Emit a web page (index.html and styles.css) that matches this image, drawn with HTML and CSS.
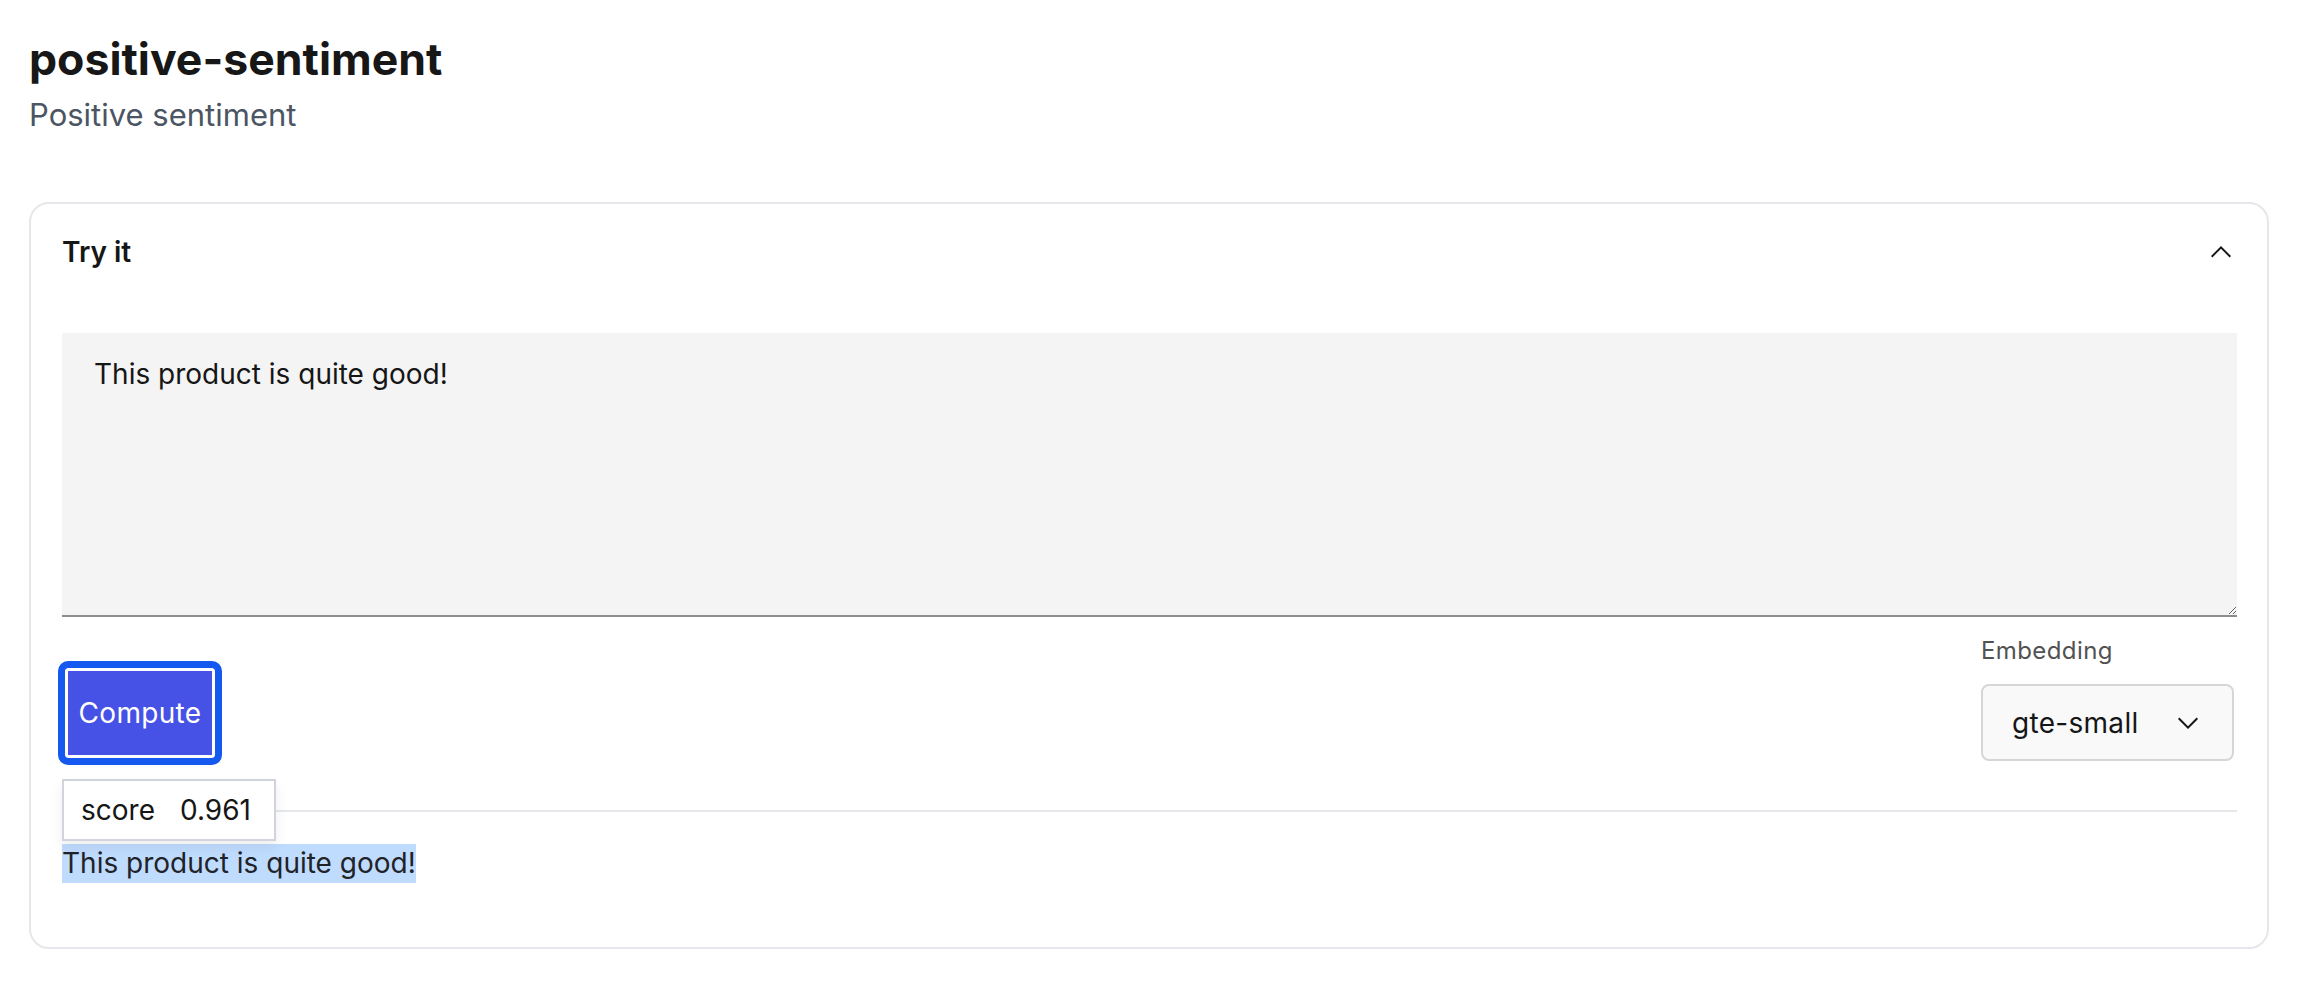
FILE: index.html
```html
<!DOCTYPE html>
<html lang="en">
<head>
<meta charset="utf-8">
<title>positive-sentiment</title>
<link rel="stylesheet" href="styles.css">
</head>
<body>
<div class="page">
  <header class="page-head">
    <h1 class="title">positive-sentiment</h1>
    <p class="subtitle">Positive sentiment</p>
  </header>
  <section class="card">
    <div class="card-head">
      <h2 class="card-title">Try it</h2>
      <button class="collapse" aria-label="Collapse">
        <svg width="32" height="32" viewBox="0 0 16 16"><path d="M8 5L13 10 12.3 10.7 8 6.4 3.7 10.7 3 10z" fill="#161616"/></svg>
      </button>
    </div>
    <div class="card-body">
      <textarea class="input" spellcheck="false">This product is quite good!</textarea>
      <div class="controls">
        <button class="compute">Compute</button>
        <div class="field">
          <label class="field-label">Embedding</label>
          <div class="select">
            <span class="select-value">gte-small</span>
            <svg width="32" height="32" viewBox="0 0 16 16"><path d="M8 11L3 6 3.7 5.3 8 9.6 12.3 5.3 13 6z" fill="#161616"/></svg>
          </div>
        </div>
      </div>
      <div class="result">
        <div class="score-tip"><span>score</span><span>0.961</span></div>
        <p class="result-text"><span class="hl">This product is quite good!</span></p>
      </div>
    </div>
  </section>
</div>
</body>
</html>
```
FILE: styles.css
```css
html, body {
  margin: 0;
  background: #ffffff;
}
body {
  font-family: Inter, "Noto Sans", "Liberation Sans", sans-serif;
  color: #161616;
}
.page {
  padding: 0 29px;
}
.page-head {
  padding-top: 33px;
}
.title {
  margin: 0;
  font-size: 44.6px;
  line-height: 53px;
  font-weight: 700;
  color: #171717;
}
.subtitle {
  margin: 5px 0 0;
  font-size: 31px;
  line-height: 47px;
  font-weight: 400;
  color: #4b5563;
}
.card {
  margin-top: 64px;
  border: 2px solid #e5e7eb;
  border-radius: 20px;
  padding: 0 30px 64px 31px;
}
.card-head {
  height: 96px;
  display: flex;
  align-items: center;
  justify-content: space-between;
}
.card-title {
  margin: 0;
  font-size: 28px;
  line-height: 40px;
  font-weight: 600;
  color: #161616;
}
.collapse {
  width: 32px;
  height: 32px;
  padding: 0;
  border: 0;
  background: none;
  display: flex;
}
.card-body {
  padding-top: 33px;
}
.input {
  display: block;
  width: 100%;
  height: 284px;
  box-sizing: border-box;
  margin: 0;
  padding: 22px 32px;
  background: #f4f4f4;
  border: 0;
  border-bottom: 2px solid #8d8d8d;
  border-radius: 0;
  font-family: Inter, "Noto Sans", sans-serif;
  font-size: 28px;
  line-height: 39px;
  color: #161616;
  resize: vertical;
  outline: none;
}
.controls {
  display: flex;
  justify-content: space-between;
  align-items: flex-end;
  margin-top: 18px;
}
.compute {
  width: 156px;
  height: 96px;
  box-sizing: border-box;
  padding: 0;
  border: 3px solid #1559f0;
  border-radius: 6px;
  background: #4652e6;
  box-shadow: 0 0 0 4px #1559f0, inset 0 0 0 3px #ffffff;
  color: #ffffff;
  font-family: Inter, "Noto Sans", sans-serif;
  font-size: 28px;
  letter-spacing: 0.3px;
}
.field {
  display: flex;
  flex-direction: column;
  margin-right: 3px;
}
.field-label {
  font-size: 24px;
  line-height: 32px;
  letter-spacing: 0.4px;
  color: #525252;
  margin-bottom: 17px;
}
.select {
  width: 253px;
  height: 77px;
  box-sizing: border-box;
  display: flex;
  align-items: center;
  justify-content: space-between;
  padding: 0 28px 0 29px;
  border: 2px solid #d6d6d6;
  border-radius: 8px;
  background: #f9f9f9;
}
.select-value {
  font-size: 28px;
  letter-spacing: 0.3px;
  color: #161616;
}
.result {
  position: relative;
  margin-top: 49px;
  border-top: 2px solid #e5e7eb;
  padding-top: 32px;
}
.score-tip {
  position: absolute;
  left: 0;
  top: -33px;
  height: 62px;
  box-sizing: border-box;
  display: flex;
  align-items: center;
  gap: 25px;
  padding: 0 23px 0 17px;
  background: #ffffff;
  border: 2px solid #d1d5db;
  box-shadow: 0 6px 12px rgba(0, 0, 0, 0.07);
  font-size: 28px;
  color: #161616;
}
.result-text {
  margin: 0;
  font-size: 28px;
  line-height: 39px;
}
.hl {
  display: inline-block;
  background: #bfdbfe;
  color: #1f2328;
}
```
